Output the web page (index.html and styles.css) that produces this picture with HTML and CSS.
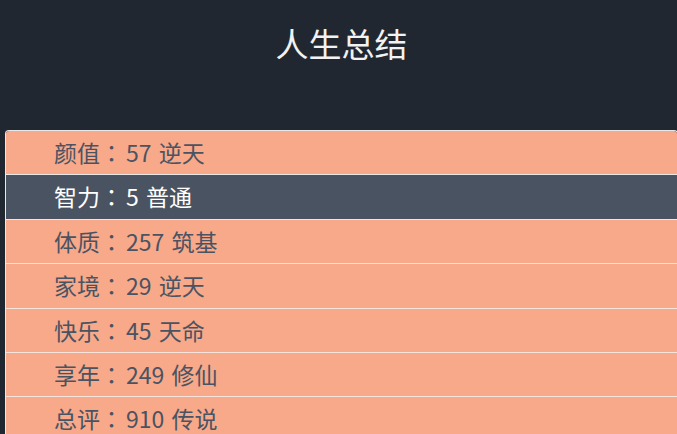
FILE: index.html
```html
<!DOCTYPE html>
<html lang="zh-CN">
<head>
<meta charset="utf-8">
<title>人生总结</title>
<link rel="stylesheet" href="styles.css">
</head>
<body>
<div class="page">
  <h1 class="title">人生总结</h1>
  <ul class="summary">
    <li class="item">颜值<span class="sep" lang="zh-TW">：</span>57 逆天</li>
    <li class="item item-active">智力<span class="sep" lang="zh-TW">：</span>5 普通</li>
    <li class="item">体质<span class="sep" lang="zh-TW">：</span>257 筑基</li>
    <li class="item">家境<span class="sep" lang="zh-TW">：</span>29 逆天</li>
    <li class="item">快乐<span class="sep" lang="zh-TW">：</span>45 天命</li>
    <li class="item">享年<span class="sep" lang="zh-TW">：</span>249 修仙</li>
    <li class="item">总评<span class="sep" lang="zh-TW">：</span>910 传说</li>
  </ul>
</div>
</body>
</html>
```
FILE: styles.css
```css
html, body {
  margin: 0;
  padding: 0;
  background: #212731;
  overflow: hidden;
}
.page {
  width: 677px;
  height: 434px;
  font-family: "Noto Sans CJK SC", "Noto Sans", sans-serif;
}
.title {
  margin: 0;
  padding-top: 21px;
  height: 130px;
  box-sizing: border-box;
  text-align: center;
  font-size: 33px;
  font-weight: 400;
  line-height: 44px;
  color: #f2f2f2;
  padding-left: 6px;
}
.summary {
  list-style: none;
  margin: 0 0 0 5px;
  padding: 0;
  width: 671px;
  border: 1px solid #e8e8e8;
  border-bottom: none;
  border-radius: 4px 4px 0 0;
  overflow: hidden;
}
.item {
  height: 43.4px;
  line-height: 43.4px;
  padding-left: 48px;
  background: #f7a98a;
  color: #4a5362;
  font-size: 23px;
  word-spacing: 2px;
  border-top: 1px solid #f4e4dc;
}
.sep {
  display: inline-block;
  width: 1em;
  margin-right: 3px;
  text-align: center;
  font-family: "Noto Sans CJK TC", "Noto Sans CJK SC", sans-serif;
}
.item:first-child {
  border-top: none;
}
.item-active {
  background: #4a5362;
  color: #ffffff;
  border-top-color: #e8e8e8;
}
.item-active + .item {
  border-top-color: #e8e8e8;
}
```
